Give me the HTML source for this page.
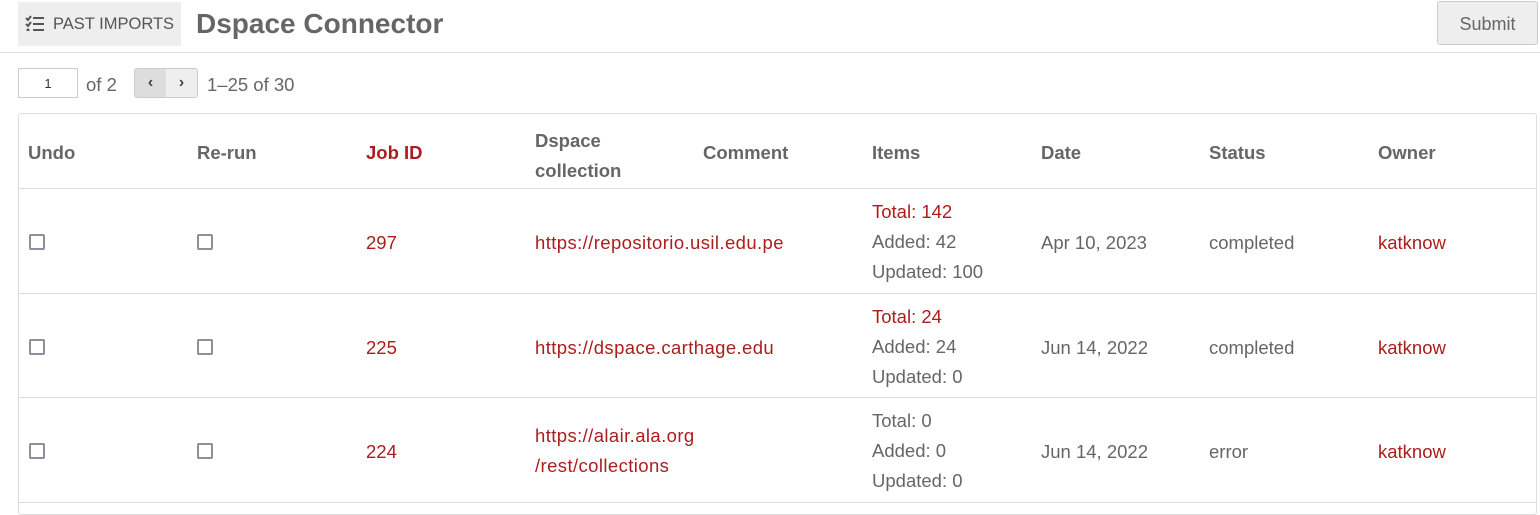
<!DOCTYPE html>
<html><head><style>
body{margin:0;width:1540px;height:505px;background:#fff;font-family:"Liberation Sans",sans-serif;color:#666;position:relative;overflow:hidden}
.a{position:absolute;white-space:nowrap}
.r{color:#ac1d1d}
.cb{position:absolute;width:12px;height:12px;border:2px solid #8e8e9c;border-radius:2px}
.t{font-size:18.5px}
.h{font-size:18.5px;font-weight:bold}
.hl{position:absolute;left:18px;width:1519px;height:1px;background:#ddd}
</style></head><body>
<div class="a" style="left:18px;top:2px;width:163px;height:44px;background:#eee"></div>
<svg class="a" style="left:25px;top:15px" width="20" height="16" viewBox="0 0 20 16"><g stroke="#555" stroke-width="2" fill="none"><path d="M1 3l2 2 3-4M1 9l2 2 3-4"/><path d="M8 3h11M8 9h11M8 15h11"/></g><circle cx="3" cy="15" r="1.5" fill="#555"/></svg>
<div class="a" style="left:53px;top:15px;font-size:16.5px;color:#555">PAST IMPORTS</div>
<div class="a" style="left:196px;top:8px;font-size:28px;font-weight:bold;color:#666">Dspace Connector</div>
<div class="a" style="left:1437px;top:1px;width:99px;height:42px;background:#eee;border:1px solid #ccc;border-radius:3px;font-size:18px;line-height:44px;text-align:center;color:#666">Submit</div>
<div class="a" style="left:0;top:52px;width:1540px;height:1px;background:#ddd"></div>
<div class="a" style="left:18px;top:68px;width:58px;height:28px;border:1px solid #ccc;font-size:13px;line-height:30px;text-align:center;color:#333">1</div>
<div class="a" style="left:86px;top:74px;font-size:18.5px">of 2</div>
<div class="a" style="left:134px;top:68px;width:31px;height:28px;background:#ddd;border:1px solid #ccc;border-radius:3px 0 0 3px;text-align:center;line-height:28px;font-size:16px;font-weight:bold;color:#444">‹</div>
<div class="a" style="left:166px;top:68px;width:31px;height:28px;background:#eee;border:1px solid #ccc;border-left:none;border-radius:0 3px 3px 0;text-align:center;line-height:28px;font-size:16px;font-weight:bold;color:#444">›</div>
<div class="a" style="left:207px;top:74px;font-size:18.5px">1–25 of 30</div>
<div class="a" style="left:18px;top:113px;width:1517px;height:400px;border:1px solid #ddd;border-radius:3px"></div>
<div class="hl" style="top:188px"></div><div class="hl" style="top:293px"></div><div class="hl" style="top:397px"></div><div class="hl" style="top:502px"></div>
<div class="a h" style="left:28px;top:142px">Undo</div>
<div class="a h" style="left:197px;top:142px">Re-run</div>
<div class="a h r" style="left:366px;top:142px">Job ID</div>
<div class="a h" style="left:535px;top:126px;line-height:30px">Dspace<br>collection</div>
<div class="a h" style="left:703px;top:142px">Comment</div>
<div class="a h" style="left:872px;top:142px">Items</div>
<div class="a h" style="left:1041px;top:142px">Date</div>
<div class="a h" style="left:1209px;top:142px">Status</div>
<div class="a h" style="left:1378px;top:142px">Owner</div>

<div class="cb" style="left:29px;top:234px"></div><div class="cb" style="left:197px;top:234px"></div>
<div class="a t r" style="left:366px;top:232px">297</div>
<div class="a t r" style="left:535px;top:232px;letter-spacing:0.4px">https://repositorio.usil.edu.pe</div>
<div class="a t" style="left:872px;top:197px;line-height:30px"><span class="r">Total: 142</span><br>Added: 42<br>Updated: 100</div>
<div class="a t" style="left:1041px;top:232px">Apr 10, 2023</div>
<div class="a t" style="left:1209px;top:232px">completed</div>
<div class="a t r" style="left:1378px;top:232px">katknow</div>

<div class="cb" style="left:29px;top:339px"></div><div class="cb" style="left:197px;top:339px"></div>
<div class="a t r" style="left:366px;top:337px">225</div>
<div class="a t r" style="left:535px;top:337px;letter-spacing:0.4px">https://dspace.carthage.edu</div>
<div class="a t" style="left:872px;top:302px;line-height:30px"><span class="r">Total: 24</span><br>Added: 24<br>Updated: 0</div>
<div class="a t" style="left:1041px;top:337px">Jun 14, 2022</div>
<div class="a t" style="left:1209px;top:337px">completed</div>
<div class="a t r" style="left:1378px;top:337px">katknow</div>

<div class="cb" style="left:29px;top:443px"></div><div class="cb" style="left:197px;top:443px"></div>
<div class="a t r" style="left:366px;top:441px">224</div>
<div class="a t r" style="left:535px;top:421px;line-height:30px;letter-spacing:0.4px">https://alair.ala.org<br>/rest/collections</div>
<div class="a t" style="left:872px;top:406px;line-height:30px">Total: 0<br>Added: 0<br>Updated: 0</div>
<div class="a t" style="left:1041px;top:441px">Jun 14, 2022</div>
<div class="a t" style="left:1209px;top:441px">error</div>
<div class="a t r" style="left:1378px;top:441px">katknow</div>
</body></html>
